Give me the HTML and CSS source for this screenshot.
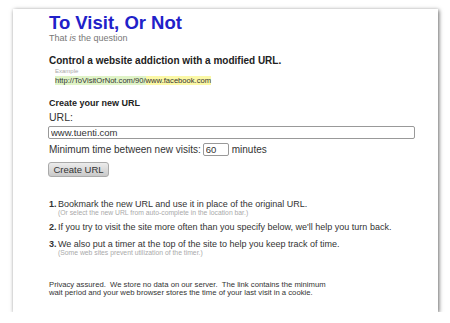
FILE: index.html
```html
<!DOCTYPE html>
<html lang="en">
	<head>
		<meta charset="UTF-8" />
		<meta name="viewport" content="width=device-width, initial-scale=1.0" />
		<title>To Visit, Or Not</title>
		<link rel="stylesheet" href="styles.css">
	</head>
	<body>
		<div class="page">
			<h1 class="title">To Visit, Or Not</h1>
			<p class="tagline">That <em>is</em> the question</p>

			<h2 class="lead">Control a website addiction with a modified URL.</h2>
			<div class="example">
				<div class="example-label">Example</div>
				<div class="example-url"><span class="hl-base">http://ToVisitOrNot.com/90/</span><span class="hl-site">www.facebook.com</span></div>
			</div>

			<form class="create">
				<h3 class="create-title">Create your new URL</h3>
				<label class="url-label" for="url">URL:</label>
				<input id="url" class="url-input" type="text" value="www.tuenti.com">
				<div class="wait-row">
					<label for="wait">Minimum time between new visits:</label>
					<input id="wait" class="wait-input" type="text" value="60">
					<span>minutes</span>
				</div>
				<button class="create-btn" type="button">Create URL</button>
			</form>

			<ol class="steps">
				<li>
					<b class="num">1.</b>
					<div>
						<div class="step-text">Bookmark the new URL and use it in place of the original URL.</div>
						<div class="note">(Or select the new URL from auto-complete in the location bar.)</div>
					</div>
				</li>
				<li>
					<b class="num">2.</b>
					<div>
						<div class="step-text">If you try to visit the site more often than you specify below, we'll help you turn back.</div>
					</div>
				</li>
				<li>
					<b class="num">3.</b>
					<div>
						<div class="step-text">We also put a timer at the top of the site to help you keep track of time.</div>
						<div class="note">(Some web sites prevent utilization of the timer.)</div>
					</div>
				</li>
			</ol>

			<p class="privacy">Privacy assured.&nbsp; We store no data on our server.&nbsp; The link contains the minimum<br>wait period and your web browser stores the time of your last visit in a cookie.</p>
		</div>
	</body>
</html>
```

FILE: styles.css
```css
body {
	margin: 0;
	background: #fff;
	font-family: "Liberation Sans", Arial, sans-serif;
	color: #333;
}
.page {
	box-sizing: border-box;
	width: 425px;
	height: 303px;
	margin: 9px 0 0 13px;
	padding: 4px 0 0 36px;
	background: #fff;
	border: 1px solid #bbb;
	border-width: 0;
	box-shadow: 1px 1px 4px rgba(0, 0, 0, 0.6);
}
.title {
	margin: 0;
	font-size: 18.5px;
	line-height: 20px;
	font-weight: bold;
	color: #2121c9;
}
.tagline {
	margin: 0;
	font-size: 9px;
	line-height: 10px;
	color: #777;
}
.lead {
	margin: 12px 0 0;
	font-size: 10px;
	line-height: 12px;
	font-weight: bold;
	color: #222;
}
.example {
	margin: 1px 0 0 6px;
}
.example-label {
	font-size: 6px;
	line-height: 7px;
	color: #aaa;
}
.example-url {
	margin-top: 1px;
	font-size: 7.6px;
	line-height: 9px;
	color: #333;
}
.hl-base {
	background: #dff3c6;
}
.hl-site {
	background: #fbf8a6;
}
.create {
	margin: 0;
}
.create-title {
	margin: 13px 0 0;
	font-size: 9px;
	line-height: 11px;
	font-weight: bold;
	color: #222;
}
.url-label {
	display: block;
	margin-top: 2px;
	font-size: 10.5px;
	line-height: 12px;
	color: #333;
}
.url-input,
.wait-input {
	box-sizing: border-box;
	height: 13px;
	padding: 0 2px;
	border: 1px solid #999;
	border-radius: 2px;
	font-family: "Liberation Sans", Arial, sans-serif;
	font-size: 9.5px;
	color: #333;
	background: #fff;
	outline: none;
}
.url-input {
	display: block;
	width: 367px;
	margin: 3px 0 0 -1px;
}
.wait-row {
	display: flex;
	align-items: center;
	height: 13px;
	margin-top: 4px;
	font-size: 10px;
	color: #333;
}
.wait-input {
	width: 26px;
	margin: 0 3px 0 2px;
}
.create-btn {
	display: block;
	box-sizing: border-box;
	width: 61px;
	height: 15px;
	margin: 6px 0 0 -1px;
	padding: 0;
	border: 1px solid #aaa;
	border-radius: 3px;
	background: linear-gradient(#ececec, #c9c9c9);
	font-family: "Liberation Sans", Arial, sans-serif;
	font-size: 9.5px;
	color: #333;
}
.steps {
	margin: 22px 0 0;
	padding: 0;
	list-style: none;
	font-size: 9px;
	color: #333;
}
.steps li {
	display: flex;
	margin-top: 6px;
}
.steps li:first-child {
	margin-top: 0;
}
.num {
	width: 9px;
	flex: none;
	line-height: 11px;
}
.step-text {
	line-height: 11px;
}
.note {
	font-size: 6.8px;
	line-height: 6px;
	color: #aaa;
}
.privacy {
	margin: 25px 0 0;
	font-size: 7.7px;
	line-height: 8px;
	color: #333;
}
```
